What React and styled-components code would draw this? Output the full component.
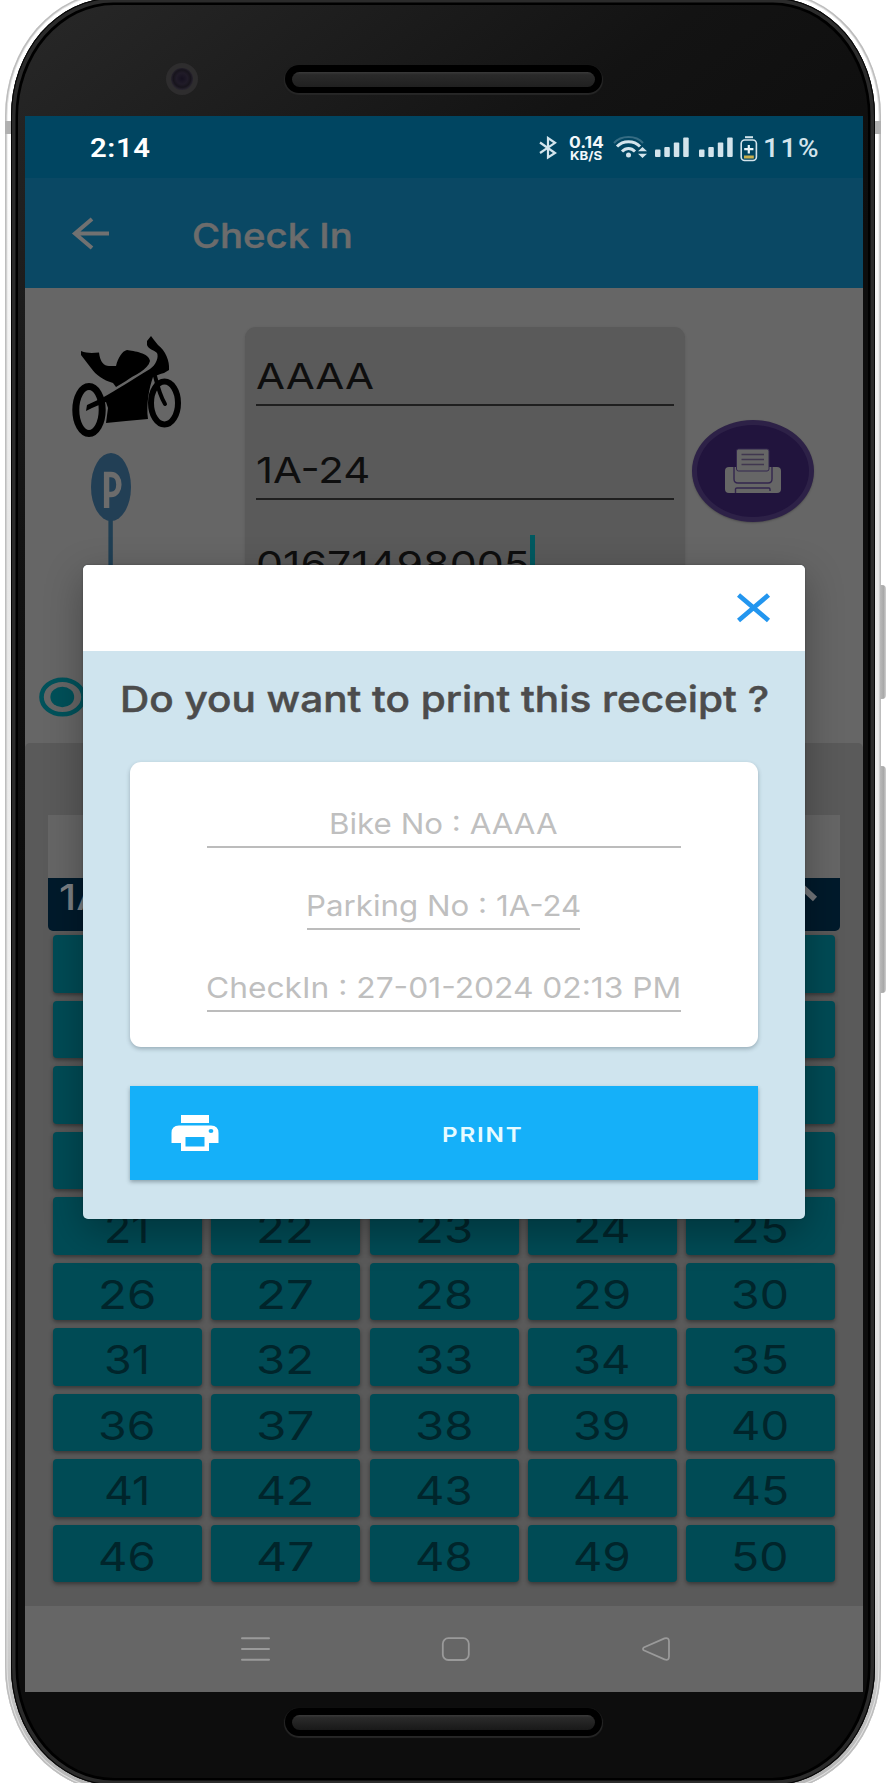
import React, { useLayoutEffect, useRef, useState } from "react";
import styled, { createGlobalStyle } from "styled-components";

const GlobalStyle = createGlobalStyle`
  * { box-sizing: border-box; }
  html, body { margin: 0; padding: 0; background: #fff; }
  body { width: 891px; height: 1783px; overflow: hidden; font-family: Inter, "Liberation Sans", sans-serif; }
  svg { display: block; }
`;

/* ---------- Wide text: glyphs are stretched to fill a given width ---------- */

const WideBox = styled.span`
  display: block;
  flex: none;
  width: ${(p) => p.$width}px;
  height: ${(p) => p.$size}px;
  line-height: ${(p) => p.$size}px;
  font-size: ${(p) => p.$size}px;
  font-weight: ${(p) => p.$weight};
  font-family: ${(p) => p.$family};
  letter-spacing: ${(p) => p.$spacing}px;
  white-space: pre;
`;

const WideInner = styled.span`
  display: inline-block;
  transform-origin: 0 50%;
`;

function WideText({ children, width, size, weight = 400, spacing = 0, family = "inherit" }) {
  const ref = useRef(null);
  const [scale, setScale] = useState(1);
  useLayoutEffect(() => {
    setScale(width / ref.current.offsetWidth);
  }, [width, children]);
  return (
    <WideBox $width={width} $size={size} $weight={weight} $spacing={spacing} $family={family}>
      <WideInner ref={ref} style={{ transform: `scaleX(${scale})` }}>
        {children}
      </WideInner>
    </WideBox>
  );
}

/* ---------- Device ---------- */

const Stage = styled.main`
  position: relative;
  width: 891px;
  height: 1783px;
  overflow: hidden;
  background: #fff;
`;

const Device = styled.div`
  width: 876px;
  height: 1799px;
  margin: -8px 0 0 5px;
  padding: 6px;
  border-radius: 108px / 124px;
  background: linear-gradient(180deg, #fff 0%, #fff 8%, #e6e6e6 30%, #f1f1f1 60%, #d8d8d8 88%, #b5b5b5 100%);
  box-shadow: inset 0 0 0 1.5px #bdbdbd, inset 0 0 0 2.5px #e2e2e2;
`;

const Bezel = styled.div`
  width: 864px;
  height: 1787px;
  padding: 7px;
  border-radius: 102px / 118px;
  background: #000;
  box-shadow: inset 0 0 0 1px #050505, inset 0 0 0 4.5px #2b2b2b;
`;

const Face = styled.div`
  display: flex;
  flex-direction: column;
  width: 850px;
  height: 1773px;
  padding: 0 6px 0 7px;
  border-radius: 96px / 112px;
  background: linear-gradient(142deg, #282828 0, #1f1f1f 180px, #131313 420px, #0d0d0d 700px);
`;

const TopBezel = styled.div`
  display: flex;
  flex: none;
  height: 111px;
  padding: 58px 0 0 141px;
  gap: 87px;
`;

const BottomBezel = styled.div`
  flex: none;
  height: 86px;
  padding: 16px 0 0 260px;
`;

const Camera = styled.div`
  width: 32px;
  height: 32px;
  border-radius: 50%;
  border: 5px solid #2e2d2e;
  background: radial-gradient(circle at 50% 48%, #15101f 0, #201b28 35%, #17141c 55%, #28242f 70%, #121014 100%);
`;

const Speaker = styled.div`
  width: 317px;
  height: 28px;
  padding: 7px;
  border-radius: 14px;
  background: #000;
  box-shadow: 0 1px 1px 1px #272727;
`;

const SpeakerTop = styled(Speaker)`
  margin-top: 2px;
`;

const SpeakerBar = styled.div`
  height: 15px;
  border-radius: 8px;
  background: linear-gradient(#3a3a3a, #2a2a2a 18%, ${(p) => (p.$dim ? "#191919" : "#202020")});
`;

const SideButton = styled.div`
  position: absolute;
  left: 880px;
  top: ${(p) => p.$top}px;
  width: 6px;
  height: ${(p) => p.$height}px;
  border-radius: 0 4px 4px 0;
  background: linear-gradient(90deg, #b9b9b9, #a9a9a9 60%, #d0d0d0);
`;

const AntennaBand = styled.div`
  position: absolute;
  left: ${(p) => p.$left}px;
  top: 121px;
  width: 6px;
  height: 13px;
  background: #b0b0b0;
`;

/* ---------- Screen ---------- */

const Screen = styled.div`
  position: relative;
  display: flex;
  flex: none;
  flex-direction: column;
  width: 838px;
  height: 1576px;
  overflow: hidden;
  background: #666;
`;

const StatusBar = styled.div`
  display: flex;
  flex: none;
  justify-content: space-between;
  height: 62px;
  padding: 20px 43px 0 65px;
  background: #004561;
  color: #fff;
`;

const StatusIcons = styled.div`
  display: flex;
  color: #d3e4ec;
`;

const StatusIcon = styled.span`
  width: ${(p) => p.$width}px;
  margin-right: ${(p) => p.$gap}px;
`;

const NetSpeed = styled.div`
  display: flex;
  flex-direction: column;
  width: 35px;
  margin: -2px 9px 0 0;
  color: #f2f8fa;
`;

const NetUnit = styled.div`
  padding-left: 1px;
`;

const AppBar = styled.header`
  display: flex;
  flex: none;
  height: 110px;
  padding: 39px 0 0 46px;
  gap: 82px;
  background: #0a4864;
  color: #6c6c6c;
`;

const AppTitle = styled.div`
  padding-top: 2px;
  -webkit-text-stroke: 0.5px currentColor;
`;

const FormSection = styled.section`
  display: flex;
  flex: none;
  position: relative;
  height: 455px;
  padding: 39px 0 0 47px;
`;

const IconColumn = styled.div`
  display: flex;
  flex-direction: column;
  width: 173px;
  padding-top: 9px;
`;

const ParkingSign = styled.div`
  margin: 15px 0 0 18px;
`;

const FieldCard = styled.div`
  width: 440px;
  height: 330px;
  padding: 0 11px;
  border-radius: 11px;
  background: #5a5a5a;
  box-shadow: 0 1px 3px rgba(0, 0, 0, 0.12);
  color: #0e0e0e;
`;

const Field = styled.div`
  display: flex;
  height: ${(p) => p.$height}px;
  padding-top: ${(p) => p.$top}px;
  border-bottom: 2px solid #1f1f1f;
`;

const Caret = styled.span`
  width: 5px;
  height: 44px;
  margin-top: -11px;
  background: #005960;
`;

const PrintFab = styled.div`
  display: flex;
  align-items: center;
  justify-content: center;
  width: 122px;
  height: 102px;
  margin: 93px 0 0 7px;
  border: 5px solid #2d2147;
  border-radius: 50%;
  background: #21143d;
  box-shadow: 0 1px 2px rgba(0, 0, 0, 0.25);
`;

const Radio = styled.div`
  position: absolute;
  left: 14px;
  top: 389px;
`;

const SlotSection = styled.section`
  flex: none;
  height: 863px;
  padding: 72px 23px 0;
  background: #5a5a5a;
  border-radius: 5px 5px 0 0;
`;

const SearchStrip = styled.div`
  height: 63px;
  background: #666;
`;

const BlockHeader = styled.div`
  display: flex;
  justify-content: space-between;
  height: 53px;
  padding: 1px 22px 0 11px;
  border-radius: 0 0 5px 5px;
  background: #001a2b;
  color: #7b7f83;
`;

const SlotGrid = styled.div`
  display: grid;
  grid-template-columns: repeat(5, 149px);
  grid-auto-rows: 57.5px;
  gap: 8.05px 9.3px;
  padding: 4px 0 0 5px;
`;

const Slot = styled.div`
  display: flex;
  justify-content: center;
  padding: 12px 1px 0 0;
  border-radius: 4px;
  background: #004b55;
  box-shadow: 0 2px 4px rgba(0, 0, 0, 0.4);
  color: #00252b;
`;

const NavBar = styled.nav`
  display: flex;
  flex: none;
  height: 86px;
  padding: 30px 0 0 215px;
  gap: 171px;
  background: #666;
`;

/* ---------- Dialog ---------- */

const DialogFrame = styled.div`
  position: absolute;
  left: 58px;
  top: 449px;
  width: 722px;
  height: 653.5px;
  border-radius: 5px;
  box-shadow: 0 12px 38px rgba(0, 0, 0, 0.3), 0 0 2px rgba(0, 0, 0, 0.3);
`;

const Dialog = styled.div`
  display: flex;
  flex-direction: column;
  height: 100%;
  border-radius: 5px;
  overflow: hidden;
  background: #cfe4ee;
`;

const DialogHeader = styled.div`
  display: flex;
  flex: none;
  justify-content: flex-end;
  height: 86px;
  padding: 28px 34px 0 0;
  background: #fff;
`;

const DialogBody = styled.div`
  display: flex;
  flex-direction: column;
  padding: 30px 47px 0 46.5px;
`;

const DialogTitle = styled.div`
  display: flex;
  justify-content: center;
  margin: 0 -21px 0 -19px;
  color: #4c4c4c;
  -webkit-text-stroke: 0.5px currentColor;
`;

const Receipt = styled.div`
  display: flex;
  flex-direction: column;
  align-items: center;
  height: 285px;
  margin-top: 44.5px;
  padding-top: 47px;
  gap: 43px;
  border-radius: 11px;
  background: #fff;
  box-shadow: 0 2px 4px rgba(40, 60, 70, 0.32);
  color: #bfbfbf;
`;

const ReceiptLine = styled.div`
  display: flex;
  flex: none;
  justify-content: center;
  width: ${(p) => p.$width}px;
  height: 39px;
  border-bottom: 2px solid #bcbcbc;
`;

const PrintButton = styled.div`
  display: flex;
  align-items: center;
  height: 94px;
  margin-top: 39.5px;
  padding-left: 41px;
  gap: 223px;
  background: #15b0f9;
  box-shadow: 0 2px 4px rgba(40, 60, 70, 0.4);
  color: #e6fbff;
`;

const ButtonLabel = styled.span`
  padding-top: 3px;
`;

/* ---------- Drawings ---------- */

const Bluetooth = () => (
  <svg width="18" height="24" viewBox="0 0 18 24" fill="none" stroke="currentColor" strokeWidth="2.2">
    <path d="M1 6.5 16 17 9 21.5V2L16 6.8 1 17" />
  </svg>
);

const Wifi = () => (
  <svg width="35" height="24" viewBox="0 0 35 24" fill="none" stroke="currentColor">
    <path d="M1 7C8 -1 23 -1 30 7" strokeWidth="2" opacity=".25" />
    <path d="M4 10.5C10 4 21 4 27 10.5" strokeWidth="3" />
    <path d="M9 15.5C13 11.5 18 11.5 22 15.5" strokeWidth="3" />
    <circle cx="15.5" cy="19" r="2.5" fill="currentColor" stroke="none" />
    <path d="M25 15.2 29.5 11 34 15.2ZM25 17.8 29.5 22 34 17.8Z" fill="currentColor" stroke="none" />
  </svg>
);

const Signal = () => (
  <svg width="34" height="24" viewBox="0 0 34 24" fill="currentColor">
    <rect x="0" y="13.5" width="5.5" height="7.5" rx="1" />
    <rect x="9.3" y="11" width="5.5" height="10" rx="1" />
    <rect x="18.8" y="6.5" width="5.5" height="14.5" rx="1" />
    <rect x="28.2" y="1.5" width="5.5" height="19.5" rx="1" />
  </svg>
);

const Battery = () => (
  <svg width="18" height="27" viewBox="0 0 18 27" fill="none">
    <path d="M5 1.2H13" stroke="#d3e4ec" strokeWidth="2" />
    <rect x="1.2" y="4" width="15.2" height="20.5" rx="3.5" stroke="#d3e4ec" strokeWidth="1.6" />
    <path d="M4.2 13.2H13.4M8.8 9V17.5" stroke="#e8f4f8" strokeWidth="2.2" />
    <rect x="4" y="19.5" width="9.8" height="3" fill="#c9b04e" />
  </svg>
);

const BackArrow = () => (
  <svg width="39" height="34" viewBox="0 0 39 34" fill="none" stroke="#717171" strokeWidth="4">
    <path d="M38 16.5H4M21 2 4 16.5 21 31" />
  </svg>
);

const Motorcycle = () => (
  <svg width="110" height="102" viewBox="0 0 110 102">
    <path d="M9 15C15 17.5 21 17 27 16.5 28 26 32 30 37 30L44 30C46 22 50 15 55 14 62 15 77 17 78 25 76 34 62 39 54 45L44 51 41 47C31 44 24 39 19 32L9 19Z" />
    <path d="M75 5 79 0 82 4 86 9C93 14 98 25 97 34L92 37C88 38 85 39 81 41 77 52 74 69 76 83L54 85 34 87 36 72 34 66 20 72 14 75 15 69 30 62C44 54 60 44 78 33 84 29 87 21 85 17 82 14 76 13 75 9Z" />
    <ellipse cx="17" cy="74" rx="13.2" ry="23.5" fill="none" stroke="#000" strokeWidth="7" />
    <ellipse cx="92.5" cy="67" rx="13.5" ry="21.5" fill="none" stroke="#000" strokeWidth="6" />
    <path d="M83 40C86 52 88 60 93 68" fill="none" stroke="#000" strokeWidth="4" strokeLinecap="round" />
  </svg>
);

const ParkingIcon = () => (
  <svg width="42" height="115" viewBox="0 0 42 115">
    <rect x="18.4" y="64" width="4.4" height="51" fill="#203f54" />
    <ellipse cx="21" cy="34" rx="20" ry="34" fill="#223f55" />
    <path d="M16.6 55V21.5H21C31.5 21.5 31.5 41.5 21 41.5H17" fill="none" stroke="#6c6c6c" strokeWidth="5.4" />
  </svg>
);

const PaperPrinter = () => (
  <svg width="58" height="46" viewBox="0 0 58 46">
    <rect x="1" y="19" width="56" height="26" rx="4" fill="#666" />
    <path d="M10 19V31Q10 35 14 35H44Q48 35 48 31V19M11.5 45V41Q11.5 40 13 40H45Q46 40 46 41.5V43" fill="none" stroke="#33264e" strokeWidth="1.4" />
    <rect x="12.5" y="1" width="32.5" height="22" rx="2" fill="#666" stroke="#33264e" strokeWidth="1" />
    <path d="M17.5 6.5H40M17.5 11.5H40M17.5 16.5H40" stroke="#40374f" strokeWidth="1.4" />
  </svg>
);

const RadioIcon = () => (
  <svg width="48" height="40" viewBox="0 0 48 40">
    <ellipse cx="23.5" cy="20" rx="21" ry="17.3" fill="none" stroke="#00525b" strokeWidth="4.6" />
    <ellipse cx="23.3" cy="20" rx="11.9" ry="10.2" fill="#005059" />
  </svg>
);

const Chevron = () => (
  <svg width="34" height="24" viewBox="0 0 34 24" fill="none" stroke="#73767a" strokeWidth="6">
    <path d="M2 20 16 6 31 20" />
  </svg>
);

const CloseIcon = () => (
  <svg width="34" height="30" viewBox="0 0 34 30" fill="none" stroke="#2396ef" strokeWidth="4.8">
    <path d="M1.5 2 31.5 27.5M31.5 2 1.5 27.5" />
  </svg>
);

const PrinterIcon = () => (
  <svg width="48" height="36" viewBox="0 0 48 36">
    <rect x="10" width="28" height="8" fill="#fff" />
    <path fillRule="evenodd" fill="#fff" d="M8 10.5H40Q47.5 10.5 47.5 18V28H38V36H10V28H.5V18Q.5 10.5 8 10.5ZM14.5 22V31.5H33.5V22ZM40 14A2.4 2 0 1 0 40 18A2.4 2 0 1 0 40 14Z" />
  </svg>
);

const MenuIcon = () => (
  <svg width="30" height="26" viewBox="0 0 30 26" stroke="#9a9a9a" strokeWidth="2" strokeLinecap="round">
    <path d="M2 2.3H29M2 13H29M2 23.7H29" />
  </svg>
);

const HomeIcon = () => (
  <svg width="30" height="26" viewBox="0 0 30 26" fill="none" stroke="#9a9a9a" strokeWidth="1.8">
    <rect x="1.8" y="2.2" width="26" height="21.8" rx="5.5" />
  </svg>
);

const BackIcon = () => (
  <svg width="30" height="26" viewBox="0 0 30 26" fill="none" stroke="#9a9a9a" strokeWidth="1.8" strokeLinejoin="round">
    <path d="M1.7 11.5 22.5 2.4Q27 1.2 27 5.5V20.5Q27 25 22.5 23.4L1.7 14.3Q.3 13 1.7 11.5Z" />
  </svg>
);

/* ---------- App ---------- */

const slots = Array.from({ length: 50 }, (_, i) => i + 1);

/* Slots up to this one sit entirely behind the dialog and need no label. */
const LAST_COVERED_SLOT = 20;

export default function App() {
  return (
    <Stage>
      <GlobalStyle />
      <Device>
        <Bezel>
          <Face>
            <TopBezel>
              <Camera />
              <SpeakerTop>
                <SpeakerBar />
              </SpeakerTop>
            </TopBezel>
            <Screen>
              <StatusBar>
                <WideText width={61} size={25} weight={600} family="Roboto, sans-serif" spacing={0.5}>
                  2:14
                </WideText>
                <StatusIcons>
                  <StatusIcon $width={18} $gap={12}>
                    <Bluetooth />
                  </StatusIcon>
                  <NetSpeed>
                    <WideText width={35} size={16} weight={700}>
                      0.14
                    </WideText>
                    <NetUnit>
                      <WideText width={32} size={12} weight={700}>
                        KB/S
                      </WideText>
                    </NetUnit>
                  </NetSpeed>
                  <StatusIcon $width={35} $gap={7}>
                    <Wifi />
                  </StatusIcon>
                  <StatusIcon $width={34} $gap={10}>
                    <Signal />
                  </StatusIcon>
                  <StatusIcon $width={34} $gap={7}>
                    <Signal />
                  </StatusIcon>
                  <StatusIcon $width={18} $gap={5}>
                    <Battery />
                  </StatusIcon>
                  <WideText width={57} size={25} weight={500} family="Roboto, sans-serif" spacing={1.5}>
                    11%
                  </WideText>
                </StatusIcons>
              </StatusBar>
              <AppBar>
                <BackArrow />
                <AppTitle>
                  <WideText width={161} size={34} weight={500}>
                    Check In
                  </WideText>
                </AppTitle>
              </AppBar>
              <FormSection>
                <IconColumn>
                  <Motorcycle />
                  <ParkingSign>
                    <ParkingIcon />
                  </ParkingSign>
                </IconColumn>
                <FieldCard>
                  <Field $height={78.5} $top={31}>
                    <WideText width={118} size={36}>
                      AAAA
                    </WideText>
                  </Field>
                  <Field $height={94} $top={46}>
                    <WideText width={114} size={36}>
                      1A-24
                    </WideText>
                  </Field>
                  <Field $height={94} $top={46}>
                    <WideText width={274} size={36}>
                      01671498005
                    </WideText>
                    <Caret />
                  </Field>
                </FieldCard>
                <PrintFab>
                  <PaperPrinter />
                </PrintFab>
                <Radio>
                  <RadioIcon />
                </Radio>
              </FormSection>
              <SlotSection>
                <SearchStrip />
                <BlockHeader>
                  <WideText width={46} size={36} weight={500}>
                    1A
                  </WideText>
                  <Chevron />
                </BlockHeader>
                <SlotGrid>
                  {slots.map((n) => (
                    <Slot key={n}>
                      {n > LAST_COVERED_SLOT && (
                        <WideText width={n % 10 === 1 ? 46 : 58} size={40}>
                          {n}
                        </WideText>
                      )}
                    </Slot>
                  ))}
                </SlotGrid>
              </SlotSection>
              <NavBar>
                <MenuIcon />
                <HomeIcon />
                <BackIcon />
              </NavBar>
              <DialogFrame>
                <Dialog>
                  <DialogHeader>
                    <CloseIcon />
                  </DialogHeader>
                  <DialogBody>
                    <DialogTitle>
                      <WideText width={649} size={36} weight={500}>
                        Do you want to print this receipt ?
                      </WideText>
                    </DialogTitle>
                    <Receipt>
                      <ReceiptLine $width={474}>
                        <WideText width={229} size={29}>
                          Bike No : AAAA
                        </WideText>
                      </ReceiptLine>
                      <ReceiptLine $width={273}>
                        <WideText width={275} size={29}>
                          Parking No : 1A-24
                        </WideText>
                      </ReceiptLine>
                      <ReceiptLine $width={474}>
                        <WideText width={475} size={29}>
                          CheckIn : 27-01-2024 02:13 PM
                        </WideText>
                      </ReceiptLine>
                    </Receipt>
                    <PrintButton>
                      <PrinterIcon />
                      <ButtonLabel>
                        <WideText width={81} size={20} weight={600} spacing={1.5}>
                          PRINT
                        </WideText>
                      </ButtonLabel>
                    </PrintButton>
                  </DialogBody>
                </Dialog>
              </DialogFrame>
            </Screen>
            <BottomBezel>
              <Speaker>
                <SpeakerBar $dim />
              </Speaker>
            </BottomBezel>
          </Face>
        </Bezel>
      </Device>
      <AntennaBand $left={5} />
      <AntennaBand $left={875} />
      <SideButton $top={585} $height={114} />
      <SideButton $top={766} $height={227} />
    </Stage>
  );
}
